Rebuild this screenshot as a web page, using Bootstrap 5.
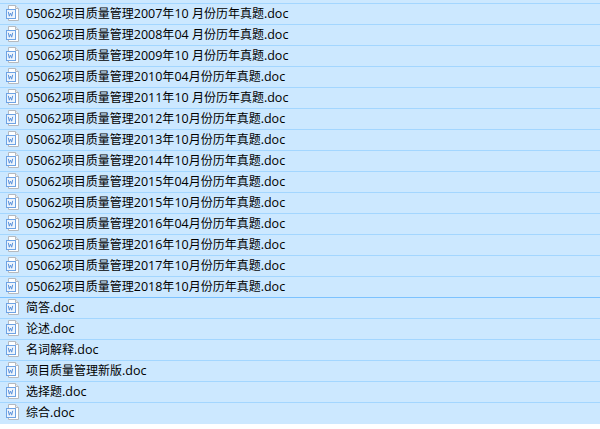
<!DOCTYPE html>
<html lang="zh"><head><meta charset="utf-8">
<link href="https://cdn.jsdelivr.net/npm/bootstrap@5.3.0/dist/css/bootstrap.min.css" rel="stylesheet">
<style>
html,body{background:#fff;height:429px;overflow:hidden}
.files{background:#cce8ff;font:12px/20px "Noto Sans CJK SC",sans-serif;color:#000;height:424px;padding-top:4px}
.frow{height:21px;border-bottom:1px solid #a3d6ff;gap:5px;padding:0 0 2px 5px;white-space:pre}
.frow:first-child{box-shadow:0 -1px 0 #a3d6ff}
.frow:nth-child(14){border-bottom-color:#7cc2ff}
.frow:last-child{border-bottom-color:transparent}
.frow svg{flex:none}
.lat{font:12.5px/20px "Open Sans",sans-serif}
</style></head><body>
<svg width="0" height="0" class="d-block"><defs><symbol id="wd" viewBox="0 0 16 16">
<path d="M3.5 .5h7l3 3v12h-10z" fill="#fff" stroke="#b4b9bf"/><path d="M10.5 .5v3h3" fill="#e8ebee" stroke="#b4b9bf"/>
<rect x="1.5" y="4.5" width="9" height="9" fill="#eef5fd" stroke="#6ea3e4"/><path d="M3.3 6.8l1 4.4 1.2-3.2 1.2 3.2 1-4.4" fill="none" stroke="#5b93dc"/></symbol></defs></svg>
<div class="files" id="list"></div>
<script>
const names=["05062项目质量管理2007年10 月份历年真题.doc","05062项目质量管理2008年04 月份历年真题.doc","05062项目质量管理2009年10 月份历年真题.doc","05062项目质量管理2010年04月份历年真题.doc","05062项目质量管理2011年10 月份历年真题.doc","05062项目质量管理2012年10月份历年真题.doc","05062项目质量管理2013年10月份历年真题.doc","05062项目质量管理2014年10月份历年真题.doc","05062项目质量管理2015年04月份历年真题.doc","05062项目质量管理2015年10月份历年真题.doc","05062项目质量管理2016年04月份历年真题.doc","05062项目质量管理2016年10月份历年真题.doc","05062项目质量管理2017年10月份历年真题.doc","05062项目质量管理2018年10月份历年真题.doc","简答.doc","论述.doc","名词解释.doc","项目质量管理新版.doc","选择题.doc","综合.doc"];
document.getElementById('list').innerHTML=names.map(n=>`<div class="frow d-flex align-items-center"><svg width="16" height="16"><use href="#wd"/></svg><span>${n.replace(/[\x20-\x7e]+/g,m=>`<span class="lat">${m}</span>`)}</span></div>`).join('');
</script>
</body></html>
